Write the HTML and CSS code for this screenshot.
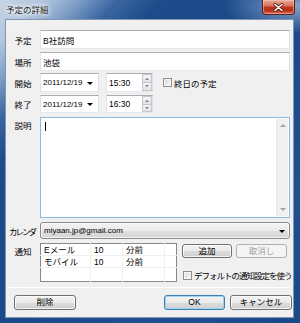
FILE: index.html
```html
<!DOCTYPE html>
<html lang="ja">

<head>
  <meta charset="UTF-8" />
  <title>予定の詳細</title>
  <link rel="stylesheet" href="styles.css">
</head>

<body>
  <div class="window">
    <div class="titlebar">
      <span class="title">予定の詳細</span>
      <span class="close">
        <svg width="11" height="9" viewBox="0 0 11 9">
          <path d="M2 1.5 L9 7.5 M9 1.5 L2 7.5" stroke="#5a1a10" stroke-width="3" stroke-linecap="round" />
          <path d="M2 1.5 L9 7.5 M9 1.5 L2 7.5" stroke="#fff" stroke-width="1.6" stroke-linecap="round" />
        </svg>
      </span>
    </div>

    <div class="client">
      <div class="row r-title">
        <span class="lbl">予定</span>
        <div class="box text wide">B社訪問</div>
      </div>

      <div class="row r-place">
        <span class="lbl">場所</span>
        <div class="box text wide">池袋</div>
      </div>

      <div class="row r-start">
        <span class="lbl">開始</span>
        <div class="box text date">2011/12/19<span class="arrow"></span></div>
        <div class="box text time">15:30
          <span class="spin"><span class="up"></span><span class="down"></span></span>
        </div>
        <span class="check"></span>
        <span class="check-label">終日の予定</span>
      </div>

      <div class="row r-end">
        <span class="lbl">終了</span>
        <div class="box text date">2011/12/19<span class="arrow"></span></div>
        <div class="box text time">16:30
          <span class="spin"><span class="up"></span><span class="down"></span></span>
        </div>
      </div>

      <div class="row r-desc">
        <span class="lbl top">説明</span>
        <div class="box memo">
          <span class="caret"></span>
          <div class="vscroll">
            <span class="sarrow up"></span>
            <span class="sarrow down"></span>
          </div>
        </div>
      </div>

      <div class="row r-cal">
        <span class="lbl narrow">カレンダ</span>
        <div class="combo">miyaan.jp@gmail.com<span class="arrow"></span></div>
      </div>

      <div class="row r-notify">
        <span class="lbl top">通知</span>
        <table class="grid">
          <tr>
            <td class="c1">Eメール</td>
            <td class="c2">10</td>
            <td class="c3">分前</td>
            <td class="c4"></td>
          </tr>
          <tr>
            <td>モバイル</td>
            <td>10</td>
            <td>分前</td>
            <td></td>
          </tr>
          <tr class="blank">
            <td></td>
            <td></td>
            <td></td>
            <td></td>
          </tr>
        </table>
        <div class="notify-side">
          <div class="btn-pair">
            <button class="btn small">追加</button>
            <button class="btn small disabled">取消し</button>
          </div>
          <div class="default-opt">
            <span class="check"></span>
            <span class="check-label tight">デフォルトの通知設定を使う</span>
          </div>
        </div>
      </div>

      <div class="separator"></div>

      <div class="footer">
        <button class="btn big delete">削除</button>
        <div class="footer-right">
          <button class="btn big default">OK</button>
          <button class="btn big">キャンセル</button>
        </div>
      </div>
    </div>
  </div>
</body>

</html>
```

FILE: styles.css
```css
* {
  box-sizing: border-box;
}

body {
  margin: 0;
  width: 300px;
  height: 323px;
  overflow: hidden;
  font-family: 'Liberation Sans', 'Noto Sans CJK JP', sans-serif;
  font-size: 8.5px;
  color: #000;
}

/* window frame (aero glass look) */
.window {
  width: 300px;
  height: 323px;
  display: flex;
  flex-direction: column;
  padding: 0 6px 5px 5px;
  background:
    radial-gradient(ellipse 70px 28px at 295px 6px, rgba(150, 178, 215, 0.85), rgba(150, 178, 215, 0) 100%),
    linear-gradient(135deg, #c6d5e7 0%, #b2c6dd 7%, #7c9cc5 13%, #3a66a0 19%, #1e4c8b 26%, #1b4989 55%, #22508f 80%, #1a4785 100%);
}

.titlebar {
  height: 19px;
  display: flex;
  justify-content: space-between;
  align-items: flex-start;
}

.title {
  padding: 3px 0 0 1px;
  color: #1c1c1c;
  font-size: 8.5px;
  text-shadow: 0 0 3px #fff, 0 0 5px #fff, 0 0 7px rgba(255, 255, 255, 0.8);
}

.close {
  width: 33px;
  height: 15px;
  margin-right: -1px;
  display: flex;
  align-items: center;
  justify-content: center;
  border: 1px solid #5e2118;
  border-top: none;
  border-radius: 0 0 4px 4px;
  background: linear-gradient(#e9a998 0%, #d8735e 40%, #c2381d 52%, #b8301a 75%, #d77458 100%);
  box-shadow: inset 0 0 0 1px rgba(255, 210, 200, 0.45);
}

.client {
  flex: 1;
  background-color: #f0f0f0;
  border: 1px solid #8196b2;
  padding: 10px 3px 0 2px;
}

/* form rows */
.row {
  display: flex;
  align-items: center;
}

.lbl {
  width: 30px;
  margin-right: 2px;
  text-align: center;
  flex-shrink: 0;
  white-space: nowrap;
}

.lbl.narrow {
  letter-spacing: -2px;
  text-indent: -2px;
}

.lbl.top {
  align-self: flex-start;
  padding-top: 2px;
}

.r-title {
  height: 19px;
}

.r-place {
  height: 19px;
  margin-top: 3px;
}

.r-start {
  height: 19px;
  margin-top: 2px;
}

.r-end {
  height: 18px;
  margin-top: 3px;
}

.r-desc {
  height: 101px;
  margin-top: 4px;
  align-items: stretch;
}

.r-cal {
  height: 17px;
  margin-top: 4px;
}

.r-notify {
  height: 39px;
  margin-top: 4px;
  align-items: stretch;
}

.box {
  background-color: #fff;
  border: 1px solid;
  border-color: #abadb3 #dbdfe6 #e3e9ef #e2e3ea;
}

.text {
  height: 100%;
  display: flex;
  align-items: center;
  padding-left: 2px;
  position: relative;
}

.wide {
  flex: 1;
}

.date {
  width: 59px;
  font-size: 8px;
}

.time {
  width: 47px;
  margin-left: 7px;
}

.arrow {
  position: absolute;
  right: 5px;
  top: 50%;
  margin-top: -1px;
  border-left: 3px solid transparent;
  border-right: 3px solid transparent;
  border-top: 3px solid #000;
}

.spin {
  position: absolute;
  right: 0;
  top: 0;
  bottom: 0;
  width: 10px;
  display: flex;
  flex-direction: column;
}

.spin span {
  flex: 1;
  position: relative;
  border: 1px solid #c4c8ce;
  background: linear-gradient(#f6f6f6, #e3e3e3);
}

.spin .down {
  border-top: none;
}

.spin span::after {
  content: '';
  position: absolute;
  left: 2px;
  top: 3px;
  border-left: 2px solid transparent;
  border-right: 2px solid transparent;
}

.spin .up::after {
  border-bottom: 2px solid #6d7f9b;
}

.spin .down::after {
  top: 2px;
  border-top: 2px solid #6d7f9b;
}

.check {
  width: 9px;
  height: 9px;
  flex-shrink: 0;
  border: 1px solid #8f8f8f;
  background: linear-gradient(135deg, #d9d9d9, #f7f7f7);
  box-shadow: inset 0 0 0 1px #f4f4f4;
}

.r-start .check {
  margin-left: 10px;
}

.check-label {
  margin-left: 2px;
  white-space: nowrap;
}

.check-label.tight {
  letter-spacing: -1px;
}

/* description */
.memo {
  flex: 1;
  position: relative;
  border-color: #8cb8e6;
}

.caret {
  position: absolute;
  left: 4px;
  top: 4px;
  width: 1px;
  height: 9px;
  background-color: #000;
}

.vscroll {
  position: absolute;
  right: 1px;
  top: 1px;
  bottom: 1px;
  width: 12px;
  background-color: #f0f0f0;
  border-left: 1px solid #e6e6e6;
}

.sarrow {
  position: absolute;
  left: 3px;
  border-left: 3px solid transparent;
  border-right: 3px solid transparent;
}

.sarrow.up {
  top: 5px;
  border-bottom: 3px solid #a3a3a3;
}

.sarrow.down {
  bottom: 5px;
  border-top: 3px solid #a3a3a3;
}

/* calendar combo */
.combo {
  flex: 1;
  height: 100%;
  position: relative;
  display: flex;
  align-items: center;
  padding-left: 3px;
  font-size: 8px;
  border: 1px solid #8a8a8a;
  border-radius: 3px;
  background: linear-gradient(#f3f3f3 0%, #ebebeb 50%, #dedede 50%, #d5d5d5 100%);
  box-shadow: inset 0 0 0 1px rgba(255, 255, 255, 0.7);
}

.combo .arrow {
  right: 4px;
}

/* notification grid */
.grid {
  width: 137px;
  height: 39px;
  flex-shrink: 0;
  border-collapse: collapse;
  background-color: #fff;
  border: 1px solid #828790;
  font-size: 8.5px;
}

.grid td {
  height: 12px;
  padding: 0 0 0 3px;
  border: 1px solid #f0f0f0;
  white-space: nowrap;
  line-height: 10px;
}

.grid tr:first-child td {
  border-top: none;
}

.grid .blank td {
  height: auto;
  border-bottom: none;
}

.grid td:first-child {
  border-left: none;
}

.grid td:last-child {
  border-right: none;
}

.c1 {
  width: 50px;
}

.c2 {
  width: 32px;
}

.c3 {
  width: 42px;
}

.notify-side {
  flex: 1;
  min-width: 0;
  margin-left: 5px;
  display: flex;
  flex-direction: column;
  justify-content: space-between;
}

.btn-pair {
  display: flex;
  gap: 4px;
  padding-top: 1px;
}

.default-opt {
  display: flex;
  align-items: center;
  margin-left: 1px;
  padding-bottom: 1px;
}

/* buttons */
.btn {
  font-family: 'Liberation Sans', 'Noto Sans CJK JP', sans-serif;
  font-size: 8.5px;
  color: #000;
  padding: 0;
  border: 1px solid #707070;
  border-radius: 3px;
  background: linear-gradient(#f2f2f2 0%, #ebebeb 50%, #dddddd 50%, #cfcfcf 100%);
  box-shadow: inset 0 0 0 1px rgba(255, 255, 255, 0.75);
  line-height: 1;
}

.btn.small {
  width: 50px;
  height: 14px;
  flex-shrink: 0;
}

.btn.small + .btn.small {
  width: 51px;
}

.btn.disabled {
  color: #a0a0a0;
  border-color: #adb2b5;
  background: #f4f4f4;
  box-shadow: none;
}

.separator {
  margin-top: 5px;
  height: 1px;
  background-color: #dcdcdc;
  border-bottom: 1px solid #fff;
}

.footer {
  margin-top: 7px;
  display: flex;
  justify-content: space-between;
  margin-right: -2px;
}

.footer-right {
  display: flex;
  gap: 5px;
}

.btn.big {
  width: 62px;
  height: 15px;
}

.btn.delete {
  margin-left: 6px;
}

.btn.default {
  width: 61px;
  border-color: #3c7fb1;
  box-shadow: inset 0 0 0 1px #9fd4f5;
}
```
